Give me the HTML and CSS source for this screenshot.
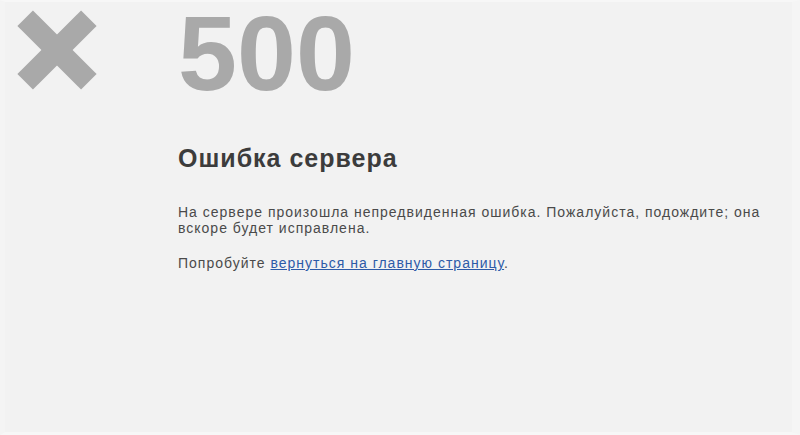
FILE: index.html
```html
<!DOCTYPE html>
<html lang="ru">
<head>
<meta charset="utf-8">
<title>Ошибка сервера</title>
<link rel="stylesheet" href="styles.css">
</head>
<body>
<div class="frame">
  <div class="layout">
    <div class="icon-col">
      <svg class="cross" width="80" height="80" viewBox="0 0 80 80" aria-hidden="true">
        <g transform="rotate(45 40 40)" fill="#a9a9a9">
          <rect x="-5" y="29" width="90" height="22"/>
          <rect x="29" y="-5" width="22" height="90"/>
        </g>
      </svg>
    </div>
    <div class="content">
      <div class="code">500</div>
      <h1 class="title">Ошибка сервера</h1>
      <p class="text">На сервере произошла непредвиденная ошибка. Пожалуйста, подождите; она вскоре будет исправлена.</p>
      <p class="text text-last">Попробуйте <a class="link" href="#">вернуться на главную страницу</a>.</p>
    </div>
  </div>
</div>
</body>
</html>
```

FILE: styles.css
```css
html, body {
  margin: 0;
  padding: 0;
  height: 100%;
  background: #f2f2f2;
}

body {
  font-family: "Liberation Sans", Arial, sans-serif;
  color: #4a4a4a;
  overflow: hidden;
}

.frame {
  box-sizing: border-box;
  height: 100%;
  border-top: 2px solid #f7f7f7;
  border-right: 8px solid #f5f5f5;
  border-bottom: 3px solid #f7f7f7;
  border-left: 5px solid #f4f4f4;
}

.layout {
  display: flex;
  align-items: flex-start;
  padding-left: 12px;
}

.icon-col {
  flex: 0 0 80px;
  padding-top: 8px;
}

.cross {
  display: block;
}

.content {
  margin-left: 81px;
  width: 600px;
}

.code {
  font-size: 106px;
  font-weight: bold;
  line-height: 102px;
  color: #a9a9a9;
}

.title {
  margin: 40px 0 0;
  font-size: 25px;
  line-height: 28px;
  font-weight: bold;
  letter-spacing: 1px;
  color: #3c3c3c;
}

.text {
  margin: 32px 0 0;
  font-size: 14px;
  line-height: 16px;
  letter-spacing: 1px;
}

.text-last {
  margin-top: 19px;
}

.link {
  color: #2d5ba8;
  text-decoration: underline;
}
```
